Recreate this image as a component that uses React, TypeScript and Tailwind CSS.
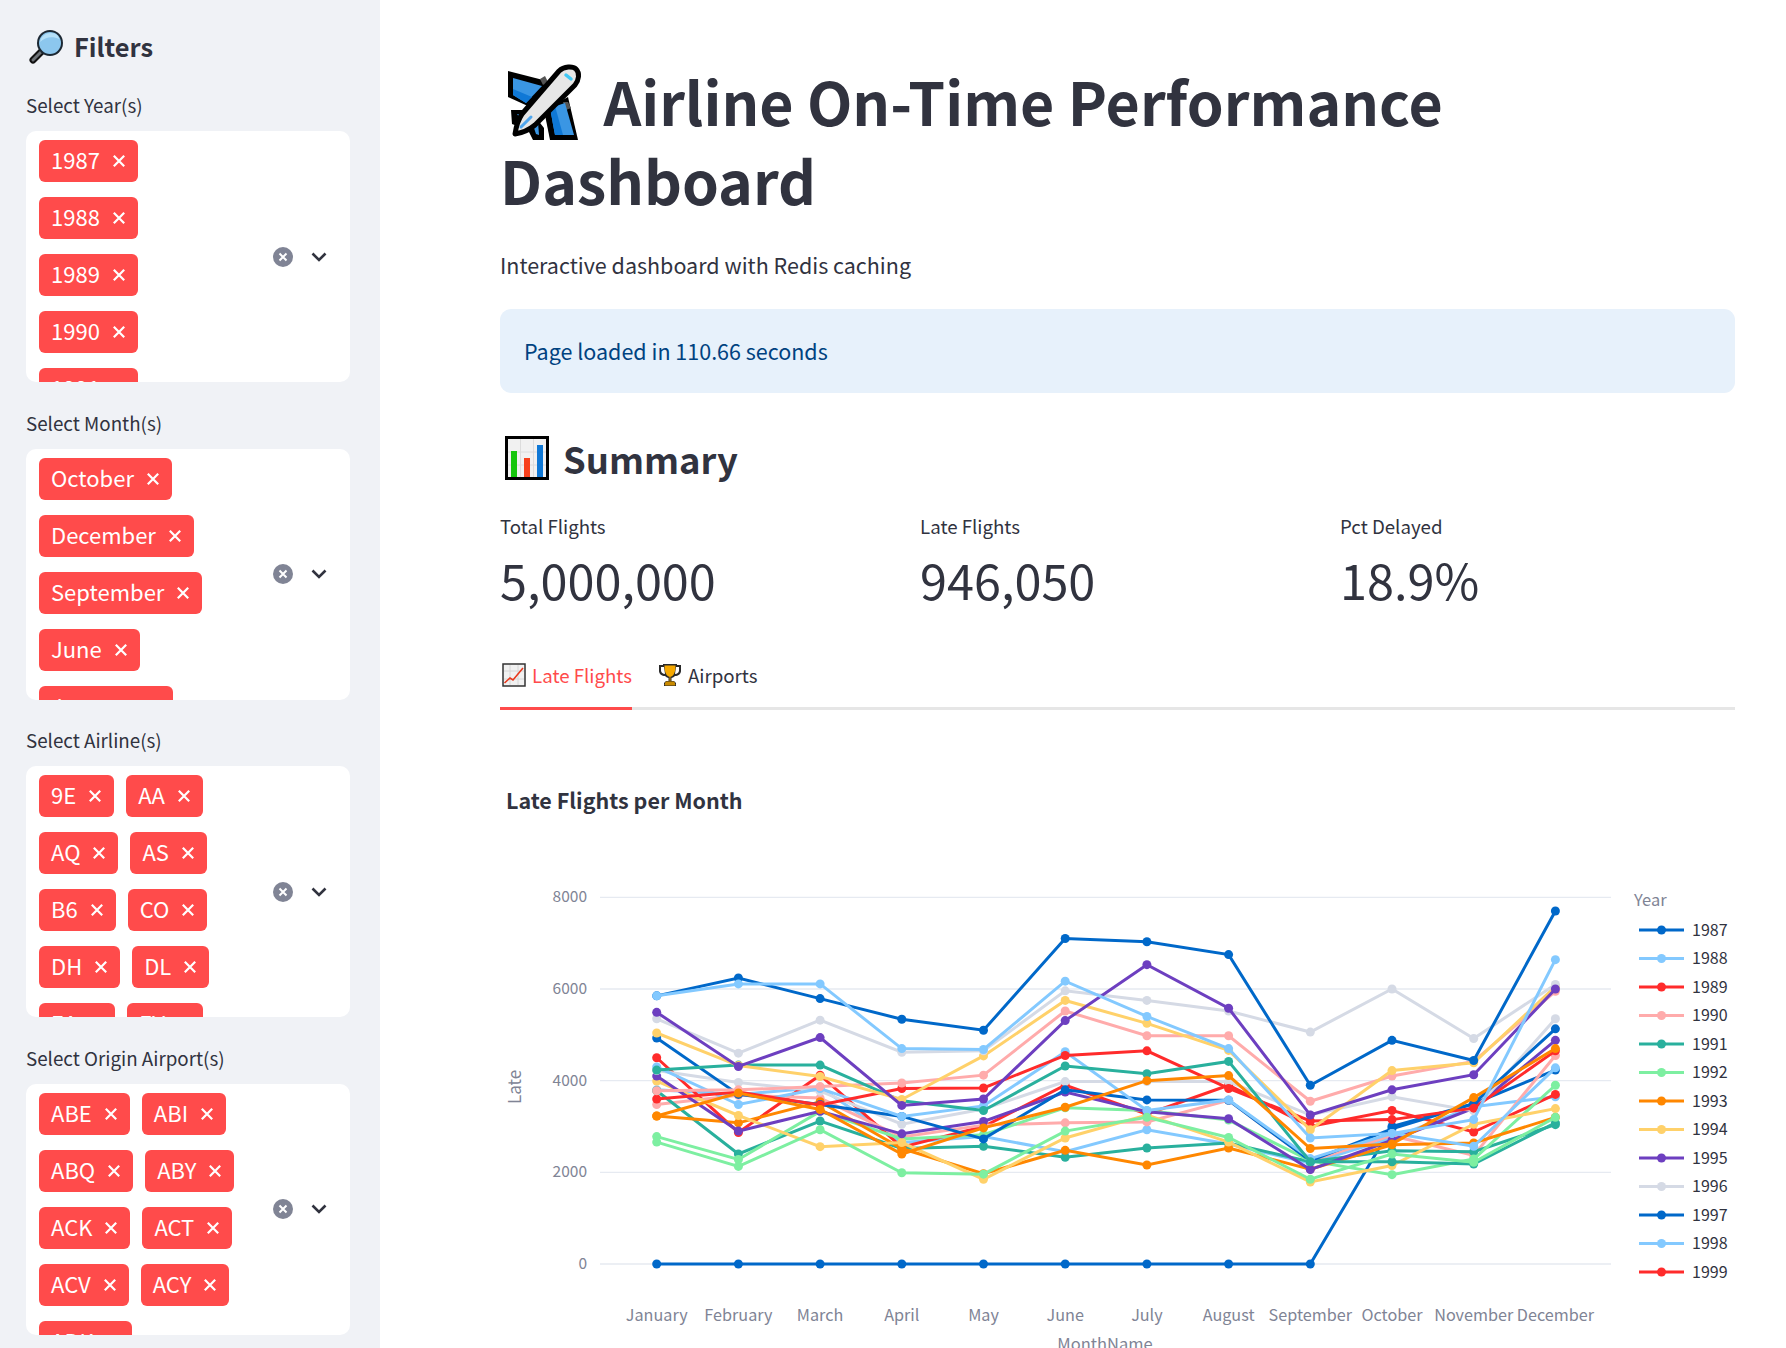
import React from "react";

const FONT = "font-['Noto_Sans_CJK_JP','Noto_Sans',sans-serif]";

function Tag({ label }: { label: string }) {
  return (
    <span className="flex h-[42px] items-center rounded-[6px] bg-[#ff4b4b] pl-[12px] pr-[13px] text-[22px] leading-none text-white">
      <span className="pb-[4px]">{label}</span>
      <svg className="ml-[13px]" width="12" height="12" viewBox="0 0 12 12">
        <path d="M0.8 0.8 L11.2 11.2 M11.2 0.8 L0.8 11.2" stroke="#fff" strokeWidth="2.2" />
      </svg>
    </span>
  );
}

function MultiSelect({ label, tags }: { label: string; tags: string[] }) {
  return (
    <div className="mb-[28.6px]">
      <div className="mb-[14px] h-[24px] text-[18.8px] leading-[24px] text-[#31333f]">{label}</div>
      <div className="flex h-[251px] items-center overflow-hidden rounded-[10px] bg-white">
        <div className="flex h-full w-[213px] flex-wrap content-start gap-x-[12px] gap-y-[15px] self-start pl-[13px] pt-[9px]">
          {tags.map((t) => (
            <Tag key={t} label={t} />
          ))}
        </div>
        <div className="ml-[34px] flex items-center gap-[18px]">
          <svg width="20" height="20" viewBox="0 0 20 20">
            <circle cx="10" cy="10" r="10" fill="#808495" />
            <path d="M6.5 6.5 L13.5 13.5 M13.5 6.5 L6.5 13.5" stroke="#fff" strokeWidth="2" />
          </svg>
          <svg width="16" height="10" viewBox="0 0 16 10">
            <path d="M1.5 1.5 L8 8 L14.5 1.5" fill="none" stroke="#31333f" strokeWidth="2.6" />
          </svg>
        </div>
      </div>
    </div>
  );
}

const PlaneEmoji = () => (
  <svg className="-my-[10px] inline-block align-[-14px]" width="90" height="90" viewBox="0 0 90 90">
    <path d="M8 11 L47 21 L30 47 L8 37 Z" fill="#000" />
    <path d="M44 50 L68 37 L78 80 L50 80 Z" fill="#000" />
    <path d="M11 50 L30 50 L44 68 L44 80 L33 80 L28 70 L12 64 Z" fill="#000" />
    <path d="M40 19 L45 16 L48 22 L43 25 Z" fill="#555" />
    <path d="M63 42 L68 42 L71 48 L66 50 Z" fill="#555" />
    <path d="M13 18 L42 26 L26 43 L13 35 Z" fill="#3a96e4" />
    <path d="M13 29 L32 37 L26 43 L13 35 Z" fill="#0f78d6" />
    <path d="M50 48 L65 43 L74 75 L55 75 Z" fill="#3a96e4" />
    <path d="M50 48 L55 46 L63 75 L55 75 Z" fill="#0f78d6" />
    <path d="M17 54 L29 56 L22 61 Z" fill="#3a96e4" />
    <path d="M33 65 L38 62 L39 75 L36 74 Z" fill="#3a96e4" />
    <path d="M15 74 C16 67 18 60 22 54 L59 11 C64 6 73 6 76 9 C80 13 79 20 75 25 L35 65 C29 70 22 73 15 74 Z" fill="#e6e6e6" stroke="#000" strokeWidth="5" strokeLinejoin="round" />
    <path d="M66 15 L71 19" stroke="#40c8f5" strokeWidth="3.5" strokeLinecap="round" />
    <path d="M21 67 L31 57" stroke="#4fa6ee" strokeWidth="3" strokeLinecap="round" />
  </svg>
);

const MagnifierEmoji = () => (
  <svg width="36" height="36" viewBox="0 0 36 36" className="shrink-0">
    <path d="M4 32 L14 22" stroke="#111" strokeWidth="7" strokeLinecap="round" />
    <path d="M4 32 L12 24" stroke="#6e7378" strokeWidth="3" strokeLinecap="round" />
    <circle cx="21" cy="15" r="13" fill="#1c2833" />
    <circle cx="21" cy="15" r="11" fill="#8cc7ee" />
    <path d="M11 14 C12 8 17 5 22 5 C27 5 30 8 30 11 C24 8 16 9 11 14 Z" fill="#b5e0f8" />
  </svg>
);

const BarsEmoji = () => (
  <svg width="44" height="44" viewBox="0 0 44 44" className="shrink-0">
    <rect x="1.5" y="1.5" width="41" height="41" fill="#f1f1f1" stroke="#000" strokeWidth="3" />
    <path d="M15.5 3 V41 M28.5 3 V41 M3 16 H41 M3 29 H41" stroke="#dcdcdc" strokeWidth="1" />
    <rect x="6" y="15" width="6" height="26" fill="#16c60c" />
    <rect x="19" y="22" width="6" height="19" fill="#f7401c" />
    <rect x="32" y="9" width="6" height="32" fill="#0f78d6" />
  </svg>
);

const ChartUpEmoji = () => (
  <svg width="24" height="24" viewBox="0 0 24 24" className="shrink-0">
    <rect x="1" y="1" width="22" height="22" fill="#f1f1f1" stroke="#333" strokeWidth="1.5" />
    <path d="M8 2 V22 M16 2 V22 M2 8 H22 M2 16 H22" stroke="#d6d6d6" strokeWidth="1" />
    <path d="M2.5 20 L8 15 L11 17 L21 5" fill="none" stroke="#e8381c" strokeWidth="1.6" />
  </svg>
);

const TrophyEmoji = () => (
  <svg width="24" height="24" viewBox="0 0 24 24" className="shrink-0">
    <path d="M5 1 H19 V2 H23 V8 C23 11 20 13 17 13 C16 14 14 15 13.5 15 V18 H16 L18 20 V23 H6 V20 L8 18 H10.5 V15 C10 15 8 14 7 13 C4 13 1 11 1 8 V2 H5 Z" fill="#2a2a2a" />
    <path d="M3 4 H6 L7 11 C5 11 3 9.5 3 7.5 Z M21 4 H18 L17 11 C19 11 21 9.5 21 7.5 Z" fill="#fff" />
    <path d="M6.5 2.5 H17.5 C17.5 9 16 13 12 14 C8 13 6.5 9 6.5 2.5 Z" fill="#f5a800" />
    <path d="M12 14 V18 M8 19 H16 L17 22 H7 Z" stroke="#c98a00" strokeWidth="1" fill="#c98a00" />
  </svg>
);

const MONTHS = ["January", "February", "March", "April", "May", "June", "July", "August", "September", "October", "November", "December"];
const C = {
  blue: "#0068c9",
  light: "#83c9ff",
  red: "#ff2b2b",
  pink: "#ffabab",
  teal: "#29b09d",
  green: "#7defa1",
  orange: "#ff8700",
  yellow: "#ffd16a",
  purple: "#6d3fc0",
  grey: "#d5dae5",
};
const SERIES: { c: string; v: number[] }[] = [
  { c: C.blue, v: [0, 0, 0, 0, 0, 0, 0, 0, 0, 3000, 3500, 4230] },
  { c: C.light, v: [3800, 3700, 3850, 2650, 2780, 2450, 2930, 2620, 2200, 2750, 3430, 3650] },
  { c: C.red, v: [4500, 2870, 4120, 2550, 3000, 3900, 3270, 3900, 3000, 3350, 2880, 3700] },
  { c: C.pink, v: [3480, 3680, 3620, 2770, 3030, 3080, 3100, 3570, 2250, 2800, 2370, 4550] },
  { c: C.teal, v: [3780, 2400, 3120, 2520, 2570, 2330, 2530, 2640, 2230, 2470, 2450, 3040] },
  { c: C.green, v: [2780, 2280, 3330, 2730, 2820, 3410, 3350, 3140, 2250, 1950, 2290, 3900] },
  { c: C.orange, v: [3230, 3080, 3540, 2520, 1970, 2480, 2160, 2530, 2070, 2600, 2640, 3200] },
  { c: C.yellow, v: [3990, 3240, 2560, 2650, 1850, 2750, 3250, 2660, 1790, 2150, 3050, 3390] },
  { c: C.purple, v: [4100, 2900, 3330, 2840, 3110, 3750, 3320, 3170, 2060, 2700, 3400, 4880] },
  { c: C.grey, v: [4220, 3960, 3770, 3050, 3380, 3980, 3980, 3980, 3250, 3650, 3340, 5350] },
  { c: C.blue, v: [4930, 3700, 3480, 3220, 2730, 3800, 3580, 3570, 2250, 2950, 3500, 5130] },
  { c: C.light, v: [4300, 3480, 3830, 3220, 3450, 4630, 3350, 3580, 2300, 2850, 2570, 4280] },
  { c: C.red, v: [3600, 3750, 3470, 3830, 3840, 4550, 4650, 3830, 3120, 3150, 3400, 4650] },
  { c: C.pink, v: [3780, 3800, 3870, 3950, 4120, 5520, 4980, 4980, 3550, 4100, 4420, 5950] },
  { c: C.teal, v: [4230, 4340, 4340, 3560, 3350, 4320, 4150, 4420, 2230, 2230, 2180, 3080] },
  { c: C.green, v: [2660, 2130, 2930, 1990, 1960, 2900, 3200, 2760, 1850, 2400, 2220, 3200] },
  { c: C.orange, v: [3230, 3730, 3370, 2400, 2970, 3420, 4000, 4110, 2520, 2620, 3630, 4700] },
  { c: C.yellow, v: [5040, 4330, 4090, 3590, 4540, 5750, 5250, 4660, 2930, 4220, 4390, 6050] },
  { c: C.grey, v: [5350, 4600, 5320, 4620, 4650, 5960, 5750, 5520, 5060, 6000, 4920, 6100] },
  { c: C.purple, v: [5490, 4310, 4940, 3460, 3600, 5310, 6530, 5580, 3250, 3800, 4130, 6000] },
  { c: C.blue, v: [5850, 6240, 5790, 5340, 5100, 7100, 7030, 6750, 3900, 4880, 4440, 7700] },
  { c: C.light, v: [5850, 6110, 6110, 4700, 4680, 6170, 5400, 4700, 2750, 2850, 3150, 6640] },
];
const LEGEND = [C.blue, C.light, C.red, C.pink, C.teal, C.green, C.orange, C.yellow, C.purple, C.grey, C.blue, C.light, C.red];

const px = (i: number) => 156.7 + i * 81.7;
const py = (v: number) => 67.3 + (8000 - v) * 0.04584;

function Chart() {
  return (
    <svg width="1235" height="520" viewBox="0 0 1235 520" className="mt-[15px] block">
      {[0, 2000, 4000, 6000, 8000].map((v) => (
        <g key={v}>
          <line x1="100" x2="1111" y1={py(v)} y2={py(v)} stroke="#e6eaf1" strokeWidth="1.3" />
          <text x="87" y={py(v) + 5} textAnchor="end" fontSize="15.5" fill="#808495">{v}</text>
        </g>
      ))}
      {MONTHS.map((m, i) => (
        <text key={m} x={px(i)} y="491" textAnchor="middle" fontSize="16.2" fill="#808495">{m}</text>
      ))}
      <text x="605" y="520" textAnchor="middle" fontSize="16.5" fill="#808495">MonthName</text>
      <text transform="translate(21 257) rotate(-90)" textAnchor="middle" fontSize="17" fill="#808495">Late</text>
      {SERIES.map((s, k) => (
        <g key={k}>
          <polyline points={s.v.map((v, i) => `${px(i)},${py(v)}`).join(" ")} fill="none" stroke={s.c} strokeWidth="3" />
          {s.v.map((v, i) => (
            <circle key={i} cx={px(i)} cy={py(v)} r="4.5" fill={s.c} />
          ))}
        </g>
      ))}
      <text x="1134" y="76" fontSize="16.5" fill="#808495">Year</text>
      {LEGEND.map((c, i) => {
        const y = 100 + i * 28.5;
        return (
          <g key={i}>
            <line x1="1139" x2="1184" y1={y} y2={y} stroke={c} strokeWidth="3" />
            <circle cx="1161.5" cy={y} r="4.5" fill={c} />
            <text x="1192" y={y + 5.5} fontSize="16" fill="#31333f">{1987 + i}</text>
          </g>
        );
      })}
    </svg>
  );
}

function Metric({ label, value }: { label: string; value: string }) {
  return (
    <div className="flex-1">
      <div className="h-[26px] text-[18.7px] leading-[26px]">{label}</div>
      <div className="mt-[10px] h-[60px] text-[48.6px] leading-[60px]">{value}</div>
    </div>
  );
}

export default function App() {
  return (
    <div className={`flex h-[1348px] overflow-hidden bg-white text-[#31333f] ${FONT}`}>
      <aside className="h-full w-[380px] shrink-0 overflow-hidden bg-[#f0f2f6] pl-[26px] pr-[30px] pt-[26px]">
        <div className="mb-[27px] flex h-[40px] items-center gap-[9px] pl-[3px] text-[25.4px] font-semibold leading-[40px]">
          <MagnifierEmoji />
          <span>Filters</span>
        </div>
        <MultiSelect label="Select Year(s)" tags={["1987", "1988", "1989", "1990", "1991"]} />
        <MultiSelect label="Select Month(s)" tags={["October", "December", "September", "June", "January"]} />
        <MultiSelect label="Select Airline(s)" tags={["9E", "AA", "AQ", "AS", "B6", "CO", "DH", "DL", "EA", "EV"]} />
        <MultiSelect label="Select Origin Airport(s)" tags={["ABE", "ABI", "ABQ", "ABY", "ACK", "ACT", "ACV", "ACY", "ADK"]} />
      </aside>
      <main className="ml-[120px] h-full w-[1235px] shrink-0">
        <h1 className="mt-[61px] text-[59px] font-bold leading-[79px]">
          <PlaneEmoji /> Airline On-Time Performance Dashboard
        </h1>
        <p className="mt-[31px] h-[30px] text-[21.5px] leading-[30px]">Interactive dashboard with Redis caching</p>
        <div className="mt-[29px] flex h-[84px] items-center rounded-[11px] bg-[#e7f1fb] pl-[24px] text-[21.5px] text-[#004280]">
          Page loaded in 110.66 seconds
        </div>
        <div className="mt-[40px] flex h-[50px] items-center gap-[14px] pl-[5px] text-[36.4px] font-semibold leading-[50px]">
          <BarsEmoji />
          <span>Summary</span>
        </div>
        <div className="mt-[30px] flex gap-[25px]">
          <Metric label="Total Flights" value="5,000,000" />
          <Metric label="Late Flights" value="946,050" />
          <Metric label="Pct Delayed" value="18.9%" />
        </div>
        <div className="mt-[40px] flex h-[61px] gap-[26px] border-b-[3px] border-[#e6e6e6]">
          <div className="-mb-[3px] flex items-center gap-[6px] border-b-[3px] border-[#ff4b4b] pb-[6px] pl-[2px] text-[18.7px] text-[#ff4b4b]">
            <ChartUpEmoji />
            <span>Late Flights</span>
          </div>
          <div className="flex items-center gap-[6px] pb-[6px] text-[18.7px]">
            <TrophyEmoji />
            <span>Airports</span>
          </div>
        </div>
        <div className="mt-[75px] h-[30px] pl-[6px] text-[21.5px] font-bold leading-[30px]">Late Flights per Month</div>
        <Chart />
      </main>
    </div>
  );
}
